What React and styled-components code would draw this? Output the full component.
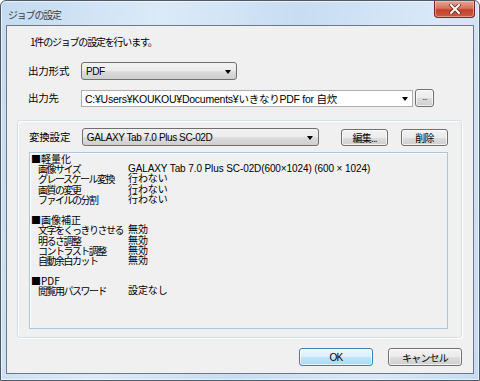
import React from "react";
import styled, { createGlobalStyle } from "styled-components";

const GlobalStyle = createGlobalStyle`
  html, body { margin: 0; padding: 0; background: #ffffff; }
  body {
    font-family: "Liberation Sans", "Noto Sans CJK JP", sans-serif;
    font-size: 12px;
    color: #000;
  }
`;

const Window = styled.div`
  width: 480px;
  height: 381px;
  box-sizing: border-box;
  border: 1px solid #4d5966;
  border-radius: 6px 6px 0 0;
  background: linear-gradient(100deg, #c4dbf1 0%, #dbeaf8 30%, #c8ddf2 55%, #d8e8f8 80%, #c6dcf2 100%);
  padding: 0 5px 6px 5px;
  display: flex;
  flex-direction: column;
  box-shadow: inset 0 0 0 1px rgba(255, 255, 255, 0.6);
`;

const TitleBar = styled.div`
  height: 24px;
  display: flex;
  align-items: flex-start;
  justify-content: space-between;
`;

const Title = styled.span`
  padding: 6px 0 0 2px;
  font-size: 10px;
  letter-spacing: -1.2px;
  color: #3c3c3c;
  font-family: "Noto Sans CJK JP", sans-serif;
`;

const CloseButton = styled.div`
  width: 41px;
  height: 17px;
  margin-right: -1px;
  box-sizing: border-box;
  border: 1px solid #6e2b24;
  border-top: none;
  border-radius: 0 0 4px 4px;
  background: linear-gradient(#e8a493 0%, #d7745d 45%, #c3412b 55%, #c95a40 100%);
  display: flex;
  align-items: center;
  justify-content: center;
  box-shadow: inset 0 0 0 1px rgba(255, 210, 200, 0.5);
`;

const Client = styled.div`
  flex: 1;
  border: 1px solid #6f7884;
  background: #f0f0f0;
  display: flex;
  flex-direction: column;
  padding: 0 11px 0 10px;
  font-family: "Noto Sans CJK JP", "Liberation Sans", sans-serif;
  font-size: 11px;
`;

const Intro = styled.div`
  margin: 9px 0 0 13px;
  line-height: 14px;
  font-size: 10px;
  letter-spacing: -1.2px;
`;

const FormRow = styled.div`
  display: flex;
  align-items: center;
  margin: ${(p) => p.$mt}px 0 0 11px;
`;

const Label = styled.span`
  width: 53px;
  line-height: 14px;
  font-size: 10.5px;
  letter-spacing: -0.2px;
  white-space: nowrap;
`;

const ComboButton = styled.div`
  width: ${(p) => p.$w}px;
  height: 18px;
  box-sizing: border-box;
  border: 1px solid #707070;
  border-radius: 3px;
  background: linear-gradient(#f2f2f2 0%, #ebebeb 50%, #dddddd 51%, #cfcfcf 100%);
  display: flex;
  align-items: center;
  justify-content: space-between;
  padding: 0 5px 0 4px;
  font-family: "Liberation Sans", "Noto Sans CJK JP", sans-serif;
  font-size: 10px;
  letter-spacing: -0.4px;
`;

const ComboEdit = styled.div`
  width: 332px;
  height: 17px;
  box-sizing: border-box;
  border: 1px solid #abadb3;
  background: #ffffff;
  display: flex;
  align-items: center;
  justify-content: space-between;
  padding: 0 4px 0 3px;
  font-family: "Liberation Sans", "Noto Sans CJK JP", sans-serif;
  font-size: 10.5px;
  letter-spacing: -0.25px;
  white-space: nowrap;
`;

const Arrow = styled.span`
  width: 0;
  height: 0;
  border-left: 3.5px solid transparent;
  border-right: 3.5px solid transparent;
  border-top: 4px solid #000;
  margin-top: 1px;
`;

const Button = styled.div`
  width: ${(p) => p.$w}px;
  height: ${(p) => p.$h || 17}px;
  box-sizing: border-box;
  border: 1px solid ${(p) => (p.$default ? "#3c7fb1" : "#707070")};
  border-radius: 3px;
  background: ${(p) =>
    p.$default
      ? "linear-gradient(#eaf6fd 0%, #d9f0fc 50%, #bee6fd 51%, #a7d9f5 100%)"
      : "linear-gradient(#f2f2f2 0%, #ebebeb 50%, #dddddd 51%, #cfcfcf 100%)"};
  box-shadow: inset 0 0 0 1px rgba(255, 255, 255, 0.7);
  display: flex;
  align-items: center;
  justify-content: center;
  font-size: 10px;
  letter-spacing: -0.8px;
  font-family: "Liberation Sans", "Noto Sans CJK JP", sans-serif;
  margin-left: ${(p) => p.$ml || 0}px;
`;

const Group = styled.div`
  margin: 13px 0 0 0;
  height: 218px;
  box-sizing: border-box;
  border: 1px solid #d5dfe5;
  border-radius: 3px;
  box-shadow: inset 1px 1px 0 #ffffff, 1px 1px 0 #ffffff;
  display: flex;
  flex-direction: column;
  padding: 0 13px 8px 11px;
`;

const GroupRow = styled.div`
  display: flex;
  align-items: center;
  margin-top: 7px;
`;

const Panel = styled.div`
  margin-top: 6px;
  flex: 1;
  border: 1px solid #a9c6e0;
  box-shadow: inset 1px 1px 0 #ffffff;
  padding: 1px 0 0 1px;
  font-family: "Noto Sans CJK JP", sans-serif;
  font-size: 10px;
  line-height: 10.2px;
`;

const Line = styled.div`
  display: flex;
  height: 10.2px;
  white-space: nowrap;
`;

const Key = styled.span`
  width: 97px;
  flex-shrink: 0;
  padding-left: ${(p) => (p.$head ? 0 : 7)}px;
  box-sizing: border-box;
  letter-spacing: ${(p) => (p.$head ? "0" : "-1.5px")};
  white-space: nowrap;
`;

const Value = styled.span`
  font-family: "Liberation Sans", "Noto Sans CJK JP", sans-serif;
  letter-spacing: -0.1px;
  white-space: nowrap;
`;

const Footer = styled.div`
  display: flex;
  justify-content: flex-end;
  margin-top: 10px;
`;

const lines = [
  ["■軽量化"],
  ["画像サイズ", "GALAXY Tab 7.0 Plus SC-02D(600×1024) (600 × 1024)"],
  ["グレースケール変換", "行わない"],
  ["画質の変更", "行わない"],
  ["ファイルの分割", "行わない"],
  [""],
  ["■画像補正"],
  ["文字をくっきりさせる", "無効"],
  ["明るさ調整", "無効"],
  ["コントラスト調整", "無効"],
  ["自動余白カット", "無効"],
  [""],
  ["■PDF"],
  ["閲覧用パスワード", "設定なし"],
];

export default function App() {
  return (
    <>
      <GlobalStyle />
      <Window>
        <TitleBar>
          <Title>ジョブの設定</Title>
          <CloseButton>
            <svg width="12" height="10" viewBox="0 0 12 10">
              <path d="M2 1 L10 9 M10 1 L2 9" stroke="#5a2a20" strokeWidth="3.4" strokeLinecap="square" />
              <path d="M2 1 L10 9 M10 1 L2 9" stroke="#ffffff" strokeWidth="2" strokeLinecap="square" />
            </svg>
          </CloseButton>
        </TitleBar>
        <Client>
          <Intro>1件のジョブの設定を行います。</Intro>
          <FormRow $mt={13}>
            <Label>出力形式</Label>
            <ComboButton $w={156}>
              <span>PDF</span>
              <Arrow />
            </ComboButton>
          </FormRow>
          <FormRow $mt={9}>
            <Label>出力先</Label>
            <ComboEdit>
              <span>C:¥Users¥KOUKOU¥Documents¥いきなりPDF for 自炊</span>
              <Arrow />
            </ComboEdit>
            <Button $w={19} $h={18} $ml={2}>
              <span style={{ fontSize: 8, marginTop: -2 }}>...</span>
            </Button>
          </FormRow>
          <Group>
            <GroupRow>
              <Label>変換設定</Label>
              <ComboButton $w={238}>
                <span>GALAXY Tab 7.0 Plus SC-02D</span>
                <Arrow />
              </ComboButton>
              <Button $w={47} $ml={22}>編集...</Button>
              <Button $w={47} $ml={13}>削除</Button>
            </GroupRow>
            <Panel>
              {lines.map(([k, v], i) => (
                <Line key={i}>
                  <Key $head={k.startsWith("■")}>{k}</Key>
                  {v && <Value>{v}</Value>}
                </Line>
              ))}
            </Panel>
          </Group>
          <Footer>
            <Button $w={74} $h={18} $default>OK</Button>
            <Button $w={74} $h={18} $ml={15}>キャンセル</Button>
          </Footer>
        </Client>
      </Window>
    </>
  );
}
